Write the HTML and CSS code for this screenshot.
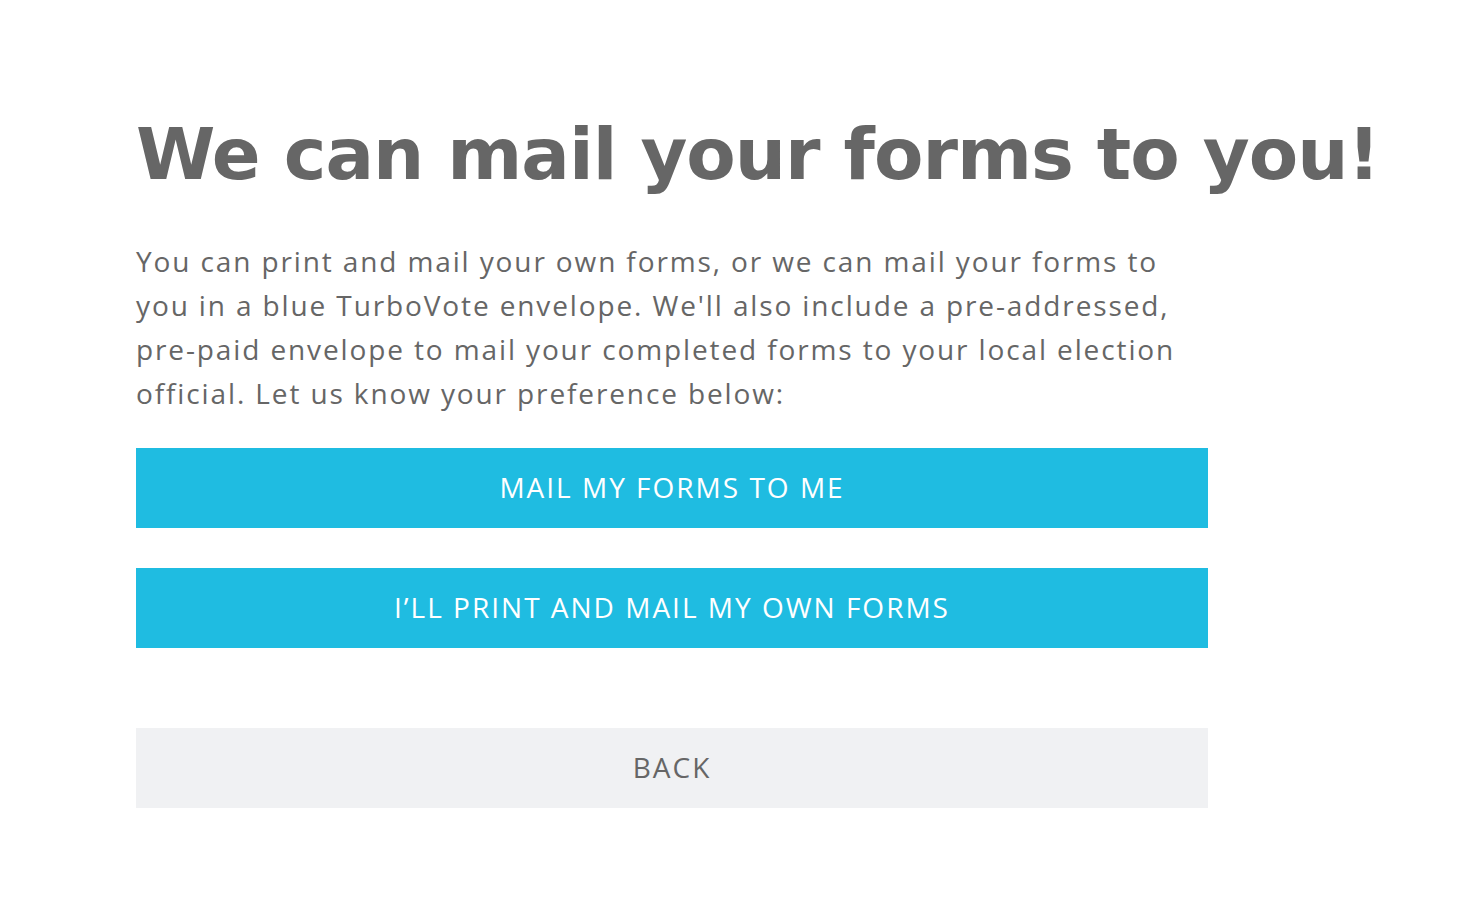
FILE: index.html
```html
<!DOCTYPE html>
<html lang="en">
<head>
<meta charset="utf-8">
<title>We can mail your forms to you!</title>
<link rel="stylesheet" href="styles.css">
</head>
<body>
<main class="page">
  <h1 class="title">We can mail your forms to you!</h1>
  <p class="intro">You can print and mail your own forms, or we can mail your forms to you in a blue TurboVote envelope. We'll also include a pre-addressed, pre-paid envelope to mail your completed forms to your local election official. Let us know your preference below:</p>
  <div class="actions">
    <button class="btn btn-primary" type="button">Mail my forms to me</button>
    <button class="btn btn-primary" type="button">I’ll print and mail my own forms</button>
    <button class="btn btn-secondary btn-back" type="button">Back</button>
  </div>
</main>
</body>
</html>
```

FILE: styles.css
```css
html, body {
  margin: 0;
  padding: 0;
  background: #ffffff;
}

.page {
  width: 1072px;
  padding: 0 0 0 136px;
  box-sizing: content-box;
}

.title {
  margin: 110px 0 0 0;
  font-family: "DejaVu Sans", Verdana, sans-serif;
  font-weight: bold;
  font-size: 72px;
  line-height: 88px;
  letter-spacing: -1px;
  color: #666666;
  white-space: nowrap;
}

.intro {
  margin: 41px 0 0 0;
  font-family: "Open Sans", sans-serif;
  font-size: 28px;
  line-height: 44px;
  letter-spacing: 1.88px;
  color: #666666;
}

.actions {
  display: flex;
  flex-direction: column;
  gap: 40px;
  margin-top: 33px;
}

.btn {
  display: block;
  width: 100%;
  height: 80px;
  border: 0;
  margin: 0;
  padding: 0 0 2px 0;
  font-family: "Open Sans", sans-serif;
  font-size: 28px;
  letter-spacing: 2px;
  text-transform: uppercase;
  cursor: pointer;
}

.btn-primary {
  background: #1fbce1;
  color: #ffffff;
}

.btn-secondary {
  background: #f0f1f3;
  color: #666666;
}

.btn-back {
  margin-top: 40px;
}
```
